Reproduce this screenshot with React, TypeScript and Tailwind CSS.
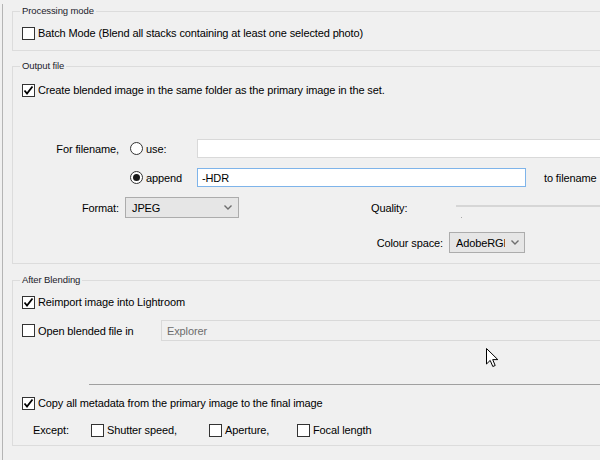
import React from 'react';

const Check = ({ checked = false }: { checked?: boolean }) => (
  <span className="flex h-[13px] w-[13px] shrink-0 items-center justify-center border border-[#333333] bg-white">
    {checked && (
      <svg width="11" height="11" viewBox="0 0 11 11">
        <path d="M1.5 5.5 L4 8.5 L9.5 1.5" fill="none" stroke="#000" strokeWidth="1.8" />
      </svg>
    )}
  </span>
);

const Radio = ({ selected = false }: { selected?: boolean }) => (
  <span className="flex h-[13px] w-[13px] shrink-0 items-center justify-center rounded-full border border-[#333333] bg-white">
    {selected && <span className="h-[7px] w-[7px] rounded-full bg-[#1a1a1a]" />}
  </span>
);

const Chevron = () => (
  <svg width="8" height="5" viewBox="0 0 8 5" className="shrink-0">
    <path d="M0.5 0.5 L4 4 L7.5 0.5" fill="none" stroke="#6e6e6e" strokeWidth="1.4" />
  </svg>
);

const Legend = ({ children }: { children: React.ReactNode }) => (
  <legend className="ml-[7px] px-[2px] text-[9.5px] leading-[14px] tracking-[-0.1px] text-[#1b1b2b]">{children}</legend>
);

export default function App() {
  return (
    <div className="relative h-[460px] w-[600px] overflow-hidden bg-[#f0f0f0] pl-[2px] font-['Liberation_Sans',Arial,sans-serif] text-[11px] leading-[16px] tracking-[-0.12px] text-black">
      <div className="h-full border-l border-[#b4b4b4]">
        {/* Processing mode */}
        <fieldset className="ml-[9px] mt-[4px] w-[620px] border border-[#dcdcdc] pb-[9px]">
          <Legend>Processing mode</Legend>
          <div className="ml-[9px] mt-[7px] flex h-[16px] items-center gap-[3px]">
            <Check />
            <span>Batch Mode (Blend all stacks containing at least one selected photo)</span>
          </div>
        </fieldset>

        {/* Output file */}
        <fieldset className="ml-[9px] mt-[8px] w-[620px] border border-[#dcdcdc] pb-[10px]">
          <Legend>Output file</Legend>
          <div className="ml-[9px] mt-[9px] flex h-[16px] items-center gap-[3px]">
            <Check checked />
            <span>Create blended image in the same folder as the primary image in the set.</span>
          </div>

          <div className="mt-[41px] flex h-[19px] items-center">
            <span className="w-[106px] text-right">For filename,</span>
            <span className="ml-[11px] flex w-[67px] items-center gap-[3px]">
              <Radio />
              <span>use:</span>
            </span>
            <div className="h-[19px] flex-1 border border-[#d9d9d9] bg-white" />
          </div>

          <div className="mt-[10px] flex h-[19px] items-center">
            <span className="w-[106px]" />
            <span className="ml-[11px] flex w-[67px] items-center gap-[3px]">
              <Radio selected />
              <span>append</span>
            </span>
            <div className="flex h-[19px] w-[329px] items-center border border-[#7eb4ea] bg-white pl-[4px]">-HDR</div>
            <span className="ml-[18px] whitespace-nowrap">to filename</span>
          </div>

          <div className="mt-[10px] flex h-[21px] items-center">
            <span className="w-[106px] text-right">Format:</span>
            <div className="ml-[6px] flex h-[21px] w-[114px] items-center justify-between border border-[#acacac] bg-[#e6e6e6] pl-[6px] pr-[6px]">
              <span>JPEG</span>
              <Chevron />
            </div>
            <span className="ml-[132px]">Quality:</span>
            <div className="ml-[49px] flex h-[21px] flex-1 flex-col self-start pt-[8px]">
              <div className="h-[3px] w-full border border-[#d6d6d6] bg-[#e7e7e7]" />
              <div className="ml-[5px] mt-[10px] h-[4px] w-[1px] bg-[#a8a8a8]" />
            </div>
          </div>

          <div className="mt-[14px] flex h-[21px] items-center">
            <span className="w-[430px] text-right">Colour space:</span>
            <div className="ml-[6px] flex h-[21px] w-[76px] items-center border border-[#acacac] bg-[#e6e6e6] pl-[6px]">
              <span className="w-[49px] overflow-hidden whitespace-nowrap">AdobeRGB</span>
              <span className="ml-[6px]"><Chevron /></span>
            </div>
          </div>
        </fieldset>

        {/* After Blending */}
        <fieldset className="ml-[9px] mt-[9px] w-[620px] border border-[#dcdcdc] pb-[7px]">
          <Legend>After Blending</Legend>
          <div className="ml-[9px] mt-[7px] flex h-[16px] items-center gap-[3px]">
            <Check checked />
            <span>Reimport image into Lightroom</span>
          </div>

          <div className="ml-[9px] mt-[10px] flex h-[21px] items-center">
            <span className="flex w-[139px] items-center gap-[3px]">
              <Check />
              <span>Open blended file in</span>
            </span>
            <div className="flex h-[21px] flex-1 items-center border border-[#d9d9d9] bg-[#f0f0f0] pl-[5px] text-[#6d6d6d]">Explorer</div>
          </div>

          <div className="ml-[76px] mt-[43px] h-[1px] bg-[#a0a0a0]" />

          <div className="ml-[9px] mt-[10px] flex h-[16px] items-center gap-[3px]">
            <Check checked />
            <span>Copy all metadata from the primary image to the final image</span>
          </div>

          <div className="ml-[20px] mt-[11px] flex h-[16px] items-center">
            <span className="w-[58px]">Except:</span>
            <span className="flex w-[118px] items-center gap-[3px]">
              <Check />
              <span>Shutter speed,</span>
            </span>
            <span className="flex w-[88px] items-center gap-[3px]">
              <Check />
              <span>Aperture,</span>
            </span>
            <span className="flex items-center gap-[3px]">
              <Check />
              <span>Focal length</span>
            </span>
          </div>
        </fieldset>
      </div>

      {/* mouse pointer */}
      <svg className="absolute left-[486px] top-[348px]" width="13" height="20" viewBox="0 0 13 20">
        <path d="M0.5 0.5 L0.5 16 L4.2 12.4 L6.8 18.5 L9.2 17.5 L6.7 11.6 L11.8 11.6 Z" fill="#fff" stroke="#000" strokeWidth="1" strokeLinejoin="miter" />
      </svg>
    </div>
  );
}
